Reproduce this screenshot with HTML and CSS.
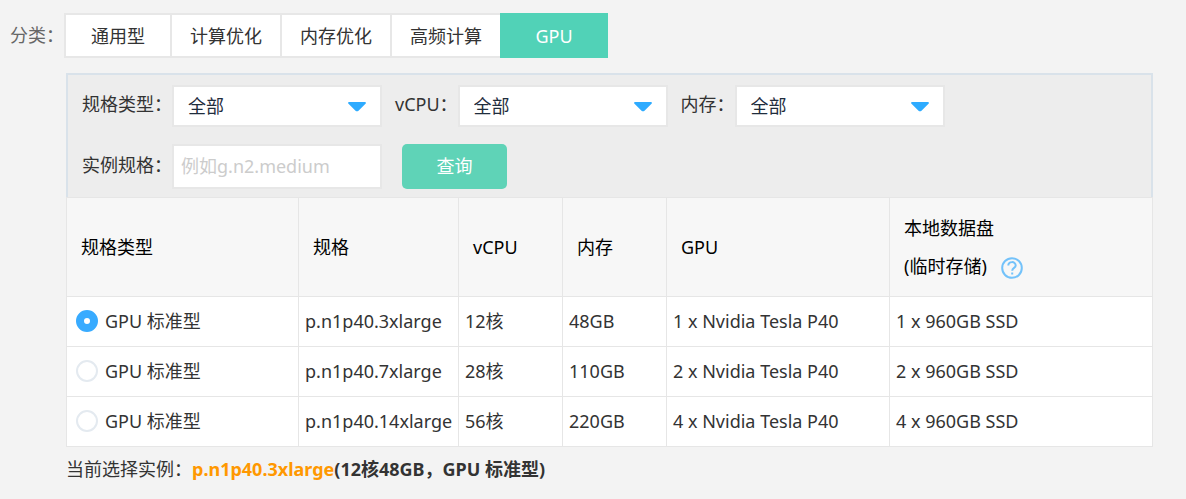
FILE: index.html
```html
<!DOCTYPE html>
<html lang="zh-CN">
<head>
<meta charset="utf-8">
<title>实例规格</title>
<link rel="stylesheet" href="styles.css">
</head>
<body>
<main class="picker">
  <div class="category">分类：</div>
  <div class="content">
    <nav class="tabs" aria-label="分类">
      <button class="tab" type="button">通用型</button>
      <button class="tab" type="button">计算优化</button>
      <button class="tab" type="button">内存优化</button>
      <button class="tab" type="button">高频计算</button>
      <button class="tab tab-active" type="button" aria-pressed="true">GPU</button>
    </nav>
    <section class="panel">
      <form class="filters">
        <div class="filter-row">
          <div class="field">
            <label for="type">规格类型：</label>
            <div class="select-box">
              <select id="type"><option>全部</option></select>
              <svg class="arrow" viewBox="0 0 18 10" aria-hidden="true"><path d="M1 0H17Q18.500 .5 17.500 1.800L10.500 8.700Q9 10 7.500 8.700L.5 1.800Q-.5.5 1 0Z"/></svg>
            </div>
          </div>
          <div class="field">
            <label for="vcpu">vCPU：</label>
            <div class="select-box">
              <select id="vcpu"><option>全部</option></select>
              <svg class="arrow" viewBox="0 0 18 10" aria-hidden="true"><path d="M1 0H17Q18.500 .5 17.500 1.800L10.500 8.700Q9 10 7.500 8.700L.5 1.800Q-.5.5 1 0Z"/></svg>
            </div>
          </div>
          <div class="field">
            <label for="memory">内存：</label>
            <div class="select-box">
              <select id="memory"><option>全部</option></select>
              <svg class="arrow" viewBox="0 0 18 10" aria-hidden="true"><path d="M1 0H17Q18.500 .5 17.500 1.800L10.500 8.700Q9 10 7.500 8.700L.5 1.800Q-.5.5 1 0Z"/></svg>
            </div>
          </div>
        </div>
        <div class="filter-row filter-row-search">
          <div class="field">
            <label for="spec">实例规格：</label>
            <input class="spec-input" id="spec" type="text" placeholder="例如g.n2.medium">
          </div>
          <button class="search" type="button">查询</button>
        </div>
      </form>
      <table class="specs">
        <colgroup>
          <col class="col-type"><col class="col-spec"><col class="col-small"><col class="col-small"><col class="col-gpu"><col class="col-disk">
        </colgroup>
        <thead>
          <tr>
            <th>规格类型</th><th>规格</th><th>vCPU</th><th>内存</th><th>GPU</th>
            <th>本地数据盘<br><span class="disk-note">(临时存储)
              <svg class="help" viewBox="0 0 22 22" aria-hidden="true"><circle cx="11" cy="11" r="9.800"/><path d="M7.300 8.600C7.300 4 14.700 4 14.700 8.400C14.700 11 11.200 10.800 11.200 13.800M11.200 15.400V17.400"/></svg></span></th>
          </tr>
        </thead>
        <tbody>
          <tr>
            <td><label class="choice"><input type="radio" name="instance" checked>GPU 标准型</label></td>
            <td>p.n1p40.3xlarge</td><td>12核</td><td>48GB</td><td>1 x Nvidia Tesla P40</td><td>1 x 960GB SSD</td>
          </tr>
          <tr>
            <td><label class="choice"><input type="radio" name="instance">GPU 标准型</label></td>
            <td>p.n1p40.7xlarge</td><td>28核</td><td>110GB</td><td>2 x Nvidia Tesla P40</td><td>2 x 960GB SSD</td>
          </tr>
          <tr>
            <td><label class="choice"><input type="radio" name="instance">GPU 标准型</label></td>
            <td>p.n1p40.14xlarge</td><td>56核</td><td>220GB</td><td>4 x Nvidia Tesla P40</td><td>4 x 960GB SSD</td>
          </tr>
        </tbody>
      </table>
      <p class="current">当前选择实例：<strong><span class="current-name">p.n1p40.3xlarge</span>(12核48GB，GPU 标准型)</strong></p>
    </section>
  </div>
</main>
</body>
</html>
```

FILE: styles.css
```css
* {
  box-sizing: border-box;
}

body {
  margin: 0;
  background: #f3f3f3;
  color: #333;
  font: 18px/26px "Noto Sans", "Noto Sans CJK SC", sans-serif;
}

button,
input,
select {
  margin: 0;
  font: inherit;
  color: inherit;
}

.picker {
  display: flex;
  padding: 13px 33px 13px 10px;
}

.category {
  flex: none;
  padding-top: 9px;
  color: #666;
}

.content {
  flex: 1;
  min-width: 0;
}

.tabs {
  display: flex;
}

.tab {
  height: 45px;
  min-width: 108px;
  padding: 0 18px;
  border: 2px solid #e7e7e7;
  border-left: 0;
  background: #fff;
}

.tab:first-child {
  border-left: 2px solid #e7e7e7;
}

.tab:nth-last-child(2) {
  padding: 0 17px;
  border-right: 0;
}

.tab-active {
  border: 0;
  background: #51d2b7;
  color: #fff;
}

.panel {
  margin: 15px 0 0 2px;
}

.filters {
  padding: 10px 14px 8px;
  border: 2px solid #d9e2ea;
  border-bottom: 0;
  background: #ededed;
}

.filter-row {
  display: flex;
  flex-wrap: wrap;
  gap: 13px;
}

.filter-row-search {
  gap: 20px;
  margin-top: 17px;
}

.field {
  display: flex;
  align-items: center;
}

.field label {
  padding-bottom: 4px;
}

.select-box {
  position: relative;
}

.select-box select {
  display: block;
  width: 210px;
  height: 42px;
  padding: 0 40px 0 14px;
  border: 2px solid #e7e7e7;
  border-radius: 0;
  background: #fff;
  color: #1f2d3d;
  appearance: none;
}

.arrow {
  position: absolute;
  top: 17px;
  right: 16px;
  width: 18px;
  height: 10px;
  fill: #2eabff;
  pointer-events: none;
}

.spec-input {
  width: 210px;
  height: 45px;
  padding: 0 7px 2px;
  border: 2px solid #e7e7e7;
  background: #fff;
}

.spec-input::placeholder {
  color: #ccc;
  opacity: 1;
}

.search {
  width: 105px;
  height: 45px;
  padding: 0 0 2px;
  border: 0;
  border-radius: 5px;
  background: #5fd3b7;
  color: #fff;
}

.specs {
  width: 100%;
  table-layout: fixed;
  border-collapse: collapse;
  background: #fff;
}

.col-type {
  width: 232px;
}

.col-spec {
  width: 160px;
}

.col-small {
  width: 104px;
}

.col-gpu {
  width: 223px;
}

.specs th,
.specs td {
  border: 1px solid #e6e6e6;
  text-align: left;
  white-space: nowrap;
}

.specs th {
  padding: 11px 14px;
  background: #f7f7f7;
  color: #000;
  font-weight: 400;
  line-height: 38px;
}

.specs td {
  height: 50px;
  padding: 0 6px 2px;
}

.specs td:first-child {
  padding-left: 9px;
}

.disk-note {
  display: flex;
  align-items: center;
  gap: 14px;
}

.help {
  width: 22px;
  height: 22px;
  margin-top: 4px;
  fill: none;
  stroke: #73c2fa;
  stroke-width: 2;
}

.choice {
  display: flex;
  align-items: center;
  gap: 7px;
}

.choice input {
  width: 22px;
  height: 22px;
  border: 2px solid #e4eaf0;
  border-radius: 50%;
  background: #fff;
  appearance: none;
}

.choice input:checked {
  border: 8px solid #38abff;
}

.current {
  margin: 9px 0 0;
}

.current-name {
  color: #ff9800;
}
```
